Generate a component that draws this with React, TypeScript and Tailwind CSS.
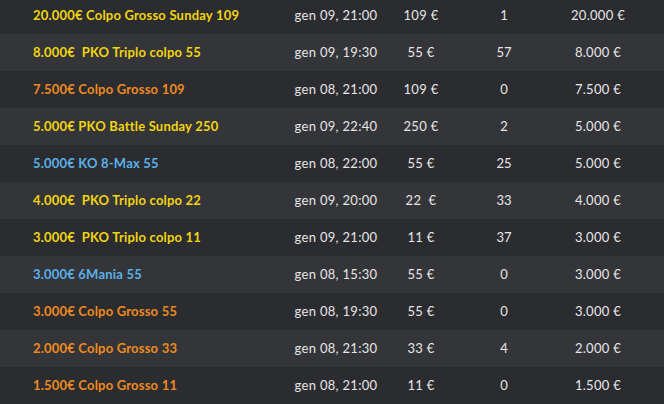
import React from "react";

type Row = { name: string; color: "y" | "o" | "b"; date: string; buy: string; n: string; prize: string };

const rows: Row[] = [
  { name: "20.000€ Colpo Grosso Sunday 109", color: "y", date: "gen 09, 21:00", buy: "109 €", n: "1", prize: "20.000 €" },
  { name: "8.000€  PKO Triplo colpo 55", color: "y", date: "gen 09, 19:30", buy: "55 €", n: "57", prize: "8.000 €" },
  { name: "7.500€ Colpo Grosso 109", color: "o", date: "gen 08, 21:00", buy: "109 €", n: "0", prize: "7.500 €" },
  { name: "5.000€ PKO Battle Sunday 250", color: "y", date: "gen 09, 22:40", buy: "250 €", n: "2", prize: "5.000 €" },
  { name: "5.000€ KO 8-Max 55", color: "b", date: "gen 08, 22:00", buy: "55 €", n: "25", prize: "5.000 €" },
  { name: "4.000€  PKO Triplo colpo 22", color: "y", date: "gen 09, 20:00", buy: "22  €", n: "33", prize: "4.000 €" },
  { name: "3.000€  PKO Triplo colpo 11", color: "y", date: "gen 09, 21:00", buy: "11 €", n: "37", prize: "3.000 €" },
  { name: "3.000€ 6Mania 55", color: "b", date: "gen 08, 15:30", buy: "55 €", n: "0", prize: "3.000 €" },
  { name: "3.000€ Colpo Grosso 55", color: "o", date: "gen 08, 19:30", buy: "55 €", n: "0", prize: "3.000 €" },
  { name: "2.000€ Colpo Grosso 33", color: "o", date: "gen 08, 21:30", buy: "33 €", n: "4", prize: "2.000 €" },
  { name: "1.500€ Colpo Grosso 11", color: "o", date: "gen 08, 21:00", buy: "11 €", n: "0", prize: "1.500 €" },
];

const colorClass = { y: "text-[#f2d40f]", o: "text-[#ef8a1e]", b: "text-[#5cb0e8]" };

export default function App() {
  return (
    <div
      className="w-[664px] h-[404px] overflow-hidden bg-[#2b2c30]"
      style={{ fontFamily: "Lato, 'Noto Sans', sans-serif" }}
    >
      <div className="-mt-[3px]">
        {rows.map((r, i) => (
          <div
            key={i}
            className={`flex items-center h-[37px] text-[13px] ${i % 2 === 0 ? "bg-[#2b2c30]" : "bg-[#343539]"}`}
          >
            <div className={`w-[276px] pl-[33px] text-[13px] font-bold whitespace-pre tracking-[0.2px] ${colorClass[r.color]}`}>{r.name}</div>
            <div className="w-[120px] text-center text-[#e6e6e6] tracking-[0.3px]">{r.date}</div>
            <div className="w-[50px] text-center text-[#e6e6e6] whitespace-pre tracking-[0.3px]">{r.buy}</div>
            <div className="w-[116px] text-center text-[#e6e6e6]">{r.n}</div>
            <div className="w-[72px] text-center text-[#e6e6e6] tracking-[0.3px]">{r.prize}</div>
          </div>
        ))}
      </div>
    </div>
  );
}
